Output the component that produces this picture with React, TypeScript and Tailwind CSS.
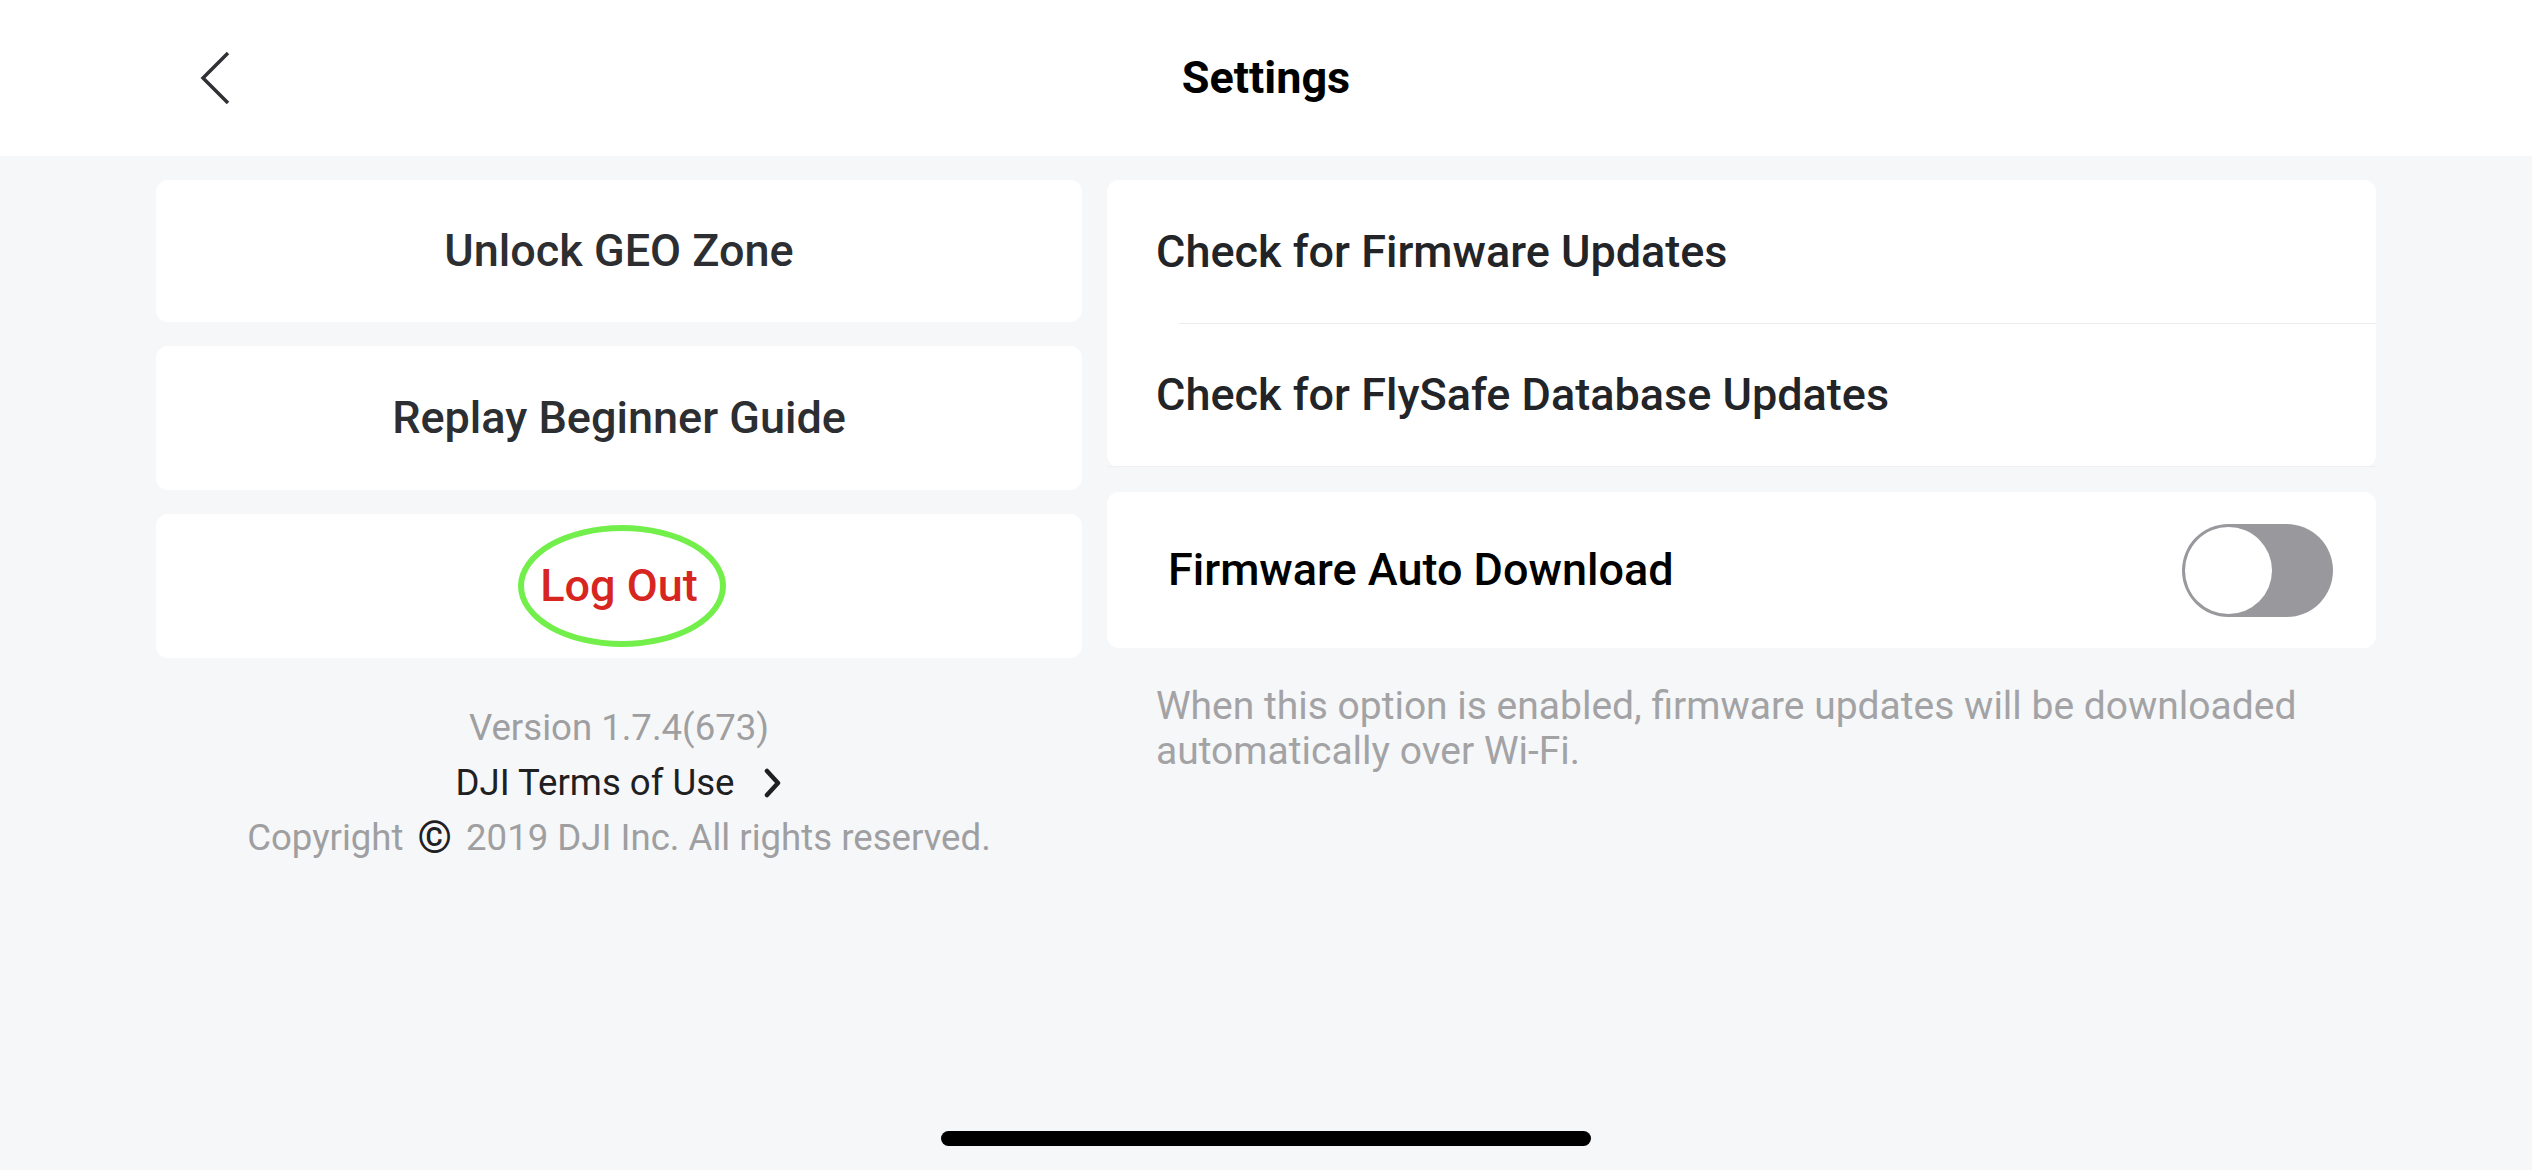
const font = { fontFamily: "Roboto, 'Noto Sans', 'Liberation Sans', sans-serif" };

function BackChevron() {
  return (
    <svg width="30" height="54" viewBox="0 0 30 54" fill="none">
      <polyline points="28,2 3,27 28,52" stroke="#2f3134" strokeWidth="3.5" strokeLinejoin="miter" />
    </svg>
  );
}

function SmallChevron() {
  return (
    <svg width="20" height="30" viewBox="0 0 20 30" fill="none">
      <polyline points="4,3 15,15 4,27" stroke="#1f2022" strokeWidth="4.5" strokeLinecap="round" strokeLinejoin="round" />
    </svg>
  );
}

function Toggle() {
  return (
    <div className="w-[151px] h-[93px] rounded-full bg-[#98989d] p-[3px] flex items-center">
      <div className="w-[87px] h-[87px] rounded-full bg-white" />
    </div>
  );
}

export default function App() {
  return (
    <div className="h-[1170px] w-[2532px] bg-[#f6f7f9] flex flex-col overflow-hidden" style={font}>
      {/* Header */}
      <header className="h-[156px] bg-white flex items-center px-[200px]">
        <BackChevron />
        <h1 className="flex-1 text-center text-[45px] font-bold text-black">Settings</h1>
        <div className="w-[30px]" />
      </header>

      <main className="flex-1 grid grid-cols-[926px_1fr] gap-x-[25px] px-[156px] pt-[24px] items-start">
        {/* Left column */}
        <div className="flex flex-col gap-[24px]">
          <div className="h-[142px] bg-white rounded-[12px] flex items-center justify-center">
            <span className="text-[45px] font-medium text-[#2c2e31]">Unlock GEO Zone</span>
          </div>
          <div className="h-[144px] bg-white rounded-[12px] flex items-center justify-center">
            <span className="text-[45px] font-medium text-[#2c2e31]">Replay Beginner Guide</span>
          </div>
          <div className="h-[144px] bg-white rounded-[12px] flex items-center justify-center">
            <span className="relative text-[45px] font-medium text-[#d7261f]">
              Log Out
              <span className="absolute left-1/2 top-1/2 -translate-x-1/2 -translate-y-1/2 ml-[3px] w-[208px] h-[122px] rounded-[50%] border-[6px] border-[#73ef4b]" />
            </span>
          </div>

          <div className="mt-[18px] flex flex-col items-center text-[36.6px] leading-[55px]">
            <p className="text-[#9f9fa1]">Version 1.7.4(673)</p>
            <p className="text-[#1f2022] flex items-center gap-[28px]">
              DJI Terms of Use
              <SmallChevron />
            </p>
            <p className="text-[#9f9fa1] flex items-center">
              Copyright
              <span className="mx-[14px] text-[#1f2022] font-bold text-[44px] leading-none">©</span>
              2019 DJI Inc. All rights reserved.
            </p>
          </div>
        </div>

        {/* Right column */}
        <div className="flex flex-col">
          <div className="bg-white rounded-[12px]">
            <div className="h-[143px] flex items-center pl-[49px]">
              <span className="text-[45px] font-medium text-[#232427]">Check for Firmware Updates</span>
            </div>
            <div className="h-px bg-[#ececef] ml-[72px]" />
            <div className="h-[143px] flex items-center pl-[49px] border-b border-[#f0f0f2]">
              <span className="text-[45px] font-medium text-[#232427]">Check for FlySafe Database Updates</span>
            </div>
          </div>

          <div className="mt-[25px] h-[156px] bg-white rounded-[12px] flex items-center justify-between pl-[61px] pr-[43px]">
            <span className="text-[45px] font-medium text-black">Firmware Auto Download</span>
            <Toggle />
          </div>

          <p className="mt-[36px] pl-[49px] pr-[20px] text-[39px] leading-[45px] text-[#a3a3a5]">
            When this option is enabled, firmware updates will be downloaded automatically over Wi-Fi.
          </p>
        </div>
      </main>

      {/* Home indicator */}
      <div className="flex justify-center pb-[24px]">
        <div className="w-[650px] h-[15px] rounded-full bg-black" />
      </div>
    </div>
  );
}
